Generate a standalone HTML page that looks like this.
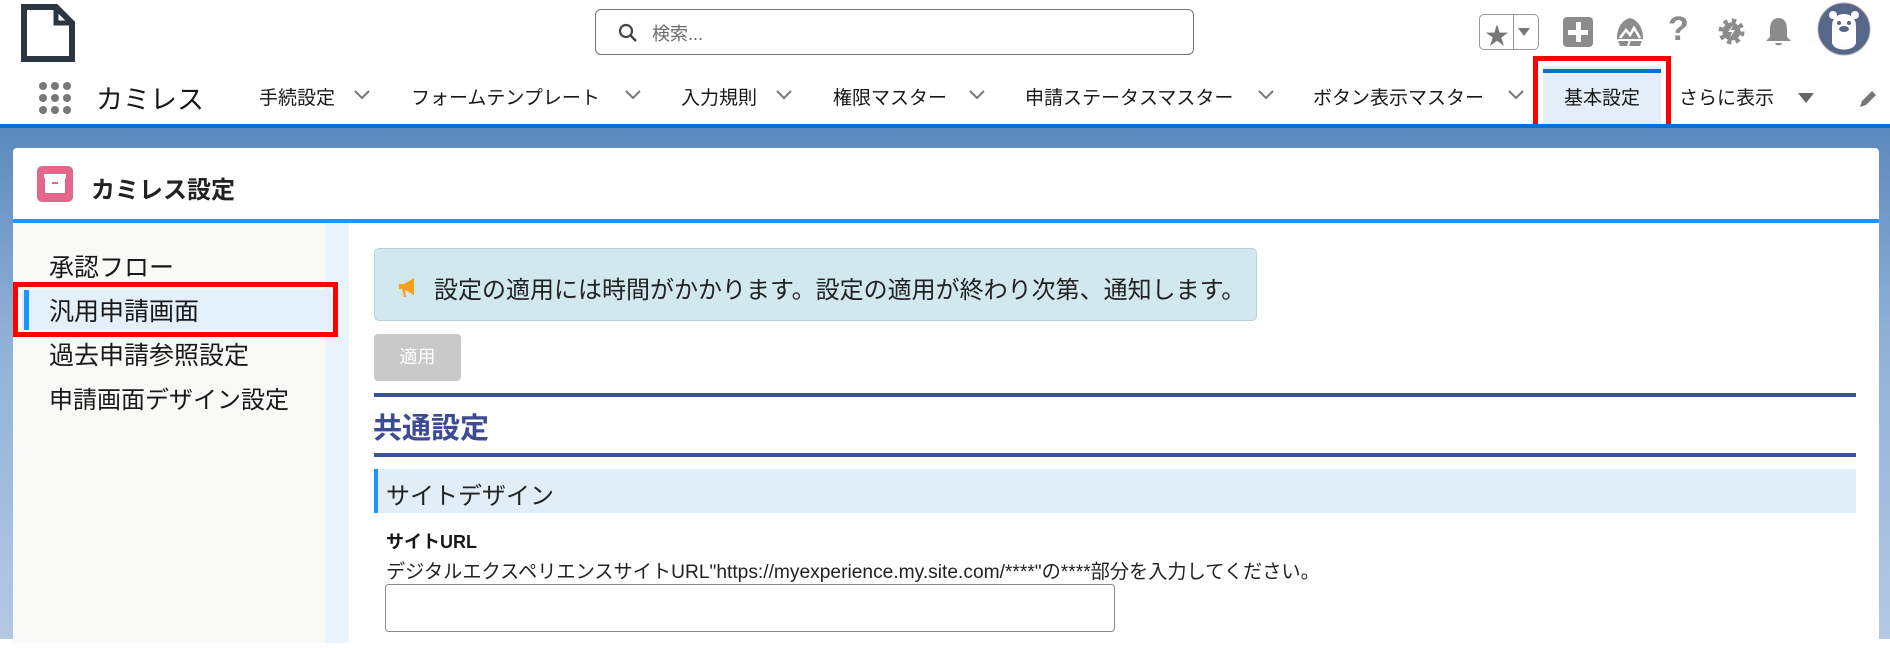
<!DOCTYPE html>
<html><head><meta charset="utf-8"><style>
*{margin:0;padding:0;box-sizing:border-box}
body{width:1890px;height:639px;overflow:hidden;position:relative;background:#fff;font-family:"Liberation Sans","Noto Sans CJK JP",sans-serif;color:#181818}
.a{position:absolute}
.nav{font-size:19px;color:#181818;top:83px;white-space:nowrap}
.chev{top:84px;width:20px;height:20px}
.side{font-size:25px;white-space:nowrap}
</style></head><body>
<svg class="a" style="left:20px;top:4px" width="58" height="58" viewBox="0 0 58 58"><path d="M4 3H36L52 19V55H4Z" fill="#fff" stroke="#2a3642" stroke-width="6"/><path d="M36 3V19H52" fill="none" stroke="#2a3642" stroke-width="5"/></svg>
<div class="a" style="left:595px;top:9px;width:599px;height:46px;border:1px solid #747474;border-radius:6px"></div>
<svg class="a" style="left:618px;top:23px" width="20" height="20" viewBox="0 0 20 20"><circle cx="8" cy="8" r="6" fill="none" stroke="#444" stroke-width="2.2"/><path d="M12.5 12.5L18 18" stroke="#444" stroke-width="2.4"/></svg>
<div class="a" style="left:652px;top:20px;font-size:18px;color:#6b6b6b">検索...</div>
<div class="a" style="left:1479px;top:14px;width:60px;height:36px;border:1px solid #999;border-radius:5px"></div>
<div class="a" style="left:1513px;top:15px;width:1px;height:34px;background:#999"></div>
<div class="a" style="left:1485px;top:16px;font-size:24px;color:#777">★</div>
<div class="a" style="left:1518px;top:28px;width:0;height:0;border-left:6px solid transparent;border-right:6px solid transparent;border-top:8px solid #777"></div>
<div class="a" style="left:1563px;top:17px;width:30px;height:30px;background:#8c8c8c;border-radius:4px"></div>
<div class="a" style="left:1576px;top:22px;width:5px;height:20px;background:#fff"></div>
<div class="a" style="left:1568px;top:30px;width:20px;height:5px;background:#fff"></div>
<svg class="a" style="left:1614px;top:16px" width="32" height="32" viewBox="0 0 32 32"><path d="M16 2C8 4 3 12 3 22L6 30H26L29 22C29 12 24 4 16 2Z" fill="#8c8c8c"/><path d="M6 22L12 14L16 19L20 12L26 22" fill="none" stroke="#fff" stroke-width="2.5"/><path d="M4 24H28M16 24L14 30" stroke="#fff" stroke-width="2"/></svg>
<div class="a" style="left:1668px;top:10px;font-size:34px;font-weight:bold;color:#8c8c8c">?</div>
<svg class="a" style="left:1717px;top:17px" width="29" height="29" viewBox="0 0 29 29"><circle cx="14.5" cy="14.5" r="10" fill="none" stroke="#8c8c8c" stroke-width="6" stroke-dasharray="4 3.85"/><circle cx="14.5" cy="14.5" r="9" fill="#8c8c8c"/><path d="M16 8L11 15H15L13 21L18 13H14Z" fill="#fff"/></svg>
<svg class="a" style="left:1763px;top:16px" width="31" height="32" viewBox="0 0 31 32"><path d="M15.5 2C9 2 7 8 7 13V21L3 25H28L24 21V13C24 8 22 2 15.5 2Z" fill="#8c8c8c"/><path d="M12 27H19C19 30 12 30 12 27Z" fill="#8c8c8c"/></svg>
<svg class="a" style="left:1817px;top:2px" width="54" height="54" viewBox="0 0 54 54"><circle cx="27" cy="27" r="26" fill="#566789" stroke="#aaa"/><circle cx="16" cy="13" r="4" fill="#fff"/><circle cx="38" cy="13" r="4" fill="#fff"/><path d="M15 24C15 8 39 8 39 24V40C39 50 15 50 15 40Z" fill="#fff"/><circle cx="22" cy="21" r="2" fill="#566789"/><circle cx="32" cy="21" r="2" fill="#566789"/><ellipse cx="27" cy="27" rx="5" ry="3" fill="#566789"/></svg>
<svg class="a" style="left:38px;top:81px" width="34" height="34" viewBox="0 0 34 34" fill="#777"><circle cx="5" cy="5" r="4"/><circle cx="17" cy="5" r="4"/><circle cx="29" cy="5" r="4"/><circle cx="5" cy="17" r="4"/><circle cx="17" cy="17" r="4"/><circle cx="29" cy="17" r="4"/><circle cx="5" cy="29" r="4"/><circle cx="17" cy="29" r="4"/><circle cx="29" cy="29" r="4"/></svg>
<div class="a" style="left:96px;top:78px;font-size:27px">カミレス</div>
<div class="a nav" style="left:259px">手続設定</div>
<div class="a nav" style="left:411px">フォームテンプレート</div>
<div class="a nav" style="left:681px">入力規則</div>
<div class="a nav" style="left:833px">権限マスター</div>
<div class="a nav" style="left:1025px">申請ステータスマスター</div>
<div class="a nav" style="left:1313px">ボタン表示マスター</div>
<svg class="a chev" style="left:352px"><path d="M3 7L10 14L17 7" fill="none" stroke="#777" stroke-width="2"/></svg>
<svg class="a chev" style="left:623px"><path d="M3 7L10 14L17 7" fill="none" stroke="#777" stroke-width="2"/></svg>
<svg class="a chev" style="left:774px"><path d="M3 7L10 14L17 7" fill="none" stroke="#777" stroke-width="2"/></svg>
<svg class="a chev" style="left:967px"><path d="M3 7L10 14L17 7" fill="none" stroke="#777" stroke-width="2"/></svg>
<svg class="a chev" style="left:1256px"><path d="M3 7L10 14L17 7" fill="none" stroke="#777" stroke-width="2"/></svg>
<svg class="a chev" style="left:1506px"><path d="M3 7L10 14L17 7" fill="none" stroke="#777" stroke-width="2"/></svg>
<div class="a" style="left:1533px;top:56px;width:138px;height:82px;border:5px solid #f00"></div>
<div class="a" style="left:1543px;top:66px;width:118px;height:58px;background:#e4eef9"></div>
<div class="a" style="left:1543px;top:69px;width:118px;height:4px;background:#0b6fd0"></div>
<div class="a nav" style="left:1564px">基本設定</div>
<div class="a nav" style="left:1679px">さらに表示</div>
<div class="a" style="left:1798px;top:93px;border-left:8px solid transparent;border-right:8px solid transparent;border-top:10px solid #666"></div>
<svg class="a" style="left:1857px;top:88px" width="22" height="22" viewBox="0 0 22 22"><path d="M3 19L5 13L15 3L19 7L9 17Z" fill="#777"/></svg>
<div class="a" style="left:0;top:124px;width:1890px;height:4px;background:#0b6fd0"></div>
<div class="a" style="left:0;top:128px;width:1890px;height:511px;background:linear-gradient(180deg,#5b89bd 0%,#8fb0d6 40%,#b3c9e4 100%)"></div>
<div class="a" style="left:13px;top:148px;width:1866px;height:500px;background:#fff;border-radius:4px 4px 0 0"></div>
<div class="a" style="left:37px;top:166px;width:36px;height:36px;background:#e3678a;border-radius:5px"></div>
<div class="a" style="left:45px;top:177px;width:20px;height:16px;background:#fff;border-radius:1px"></div>
<div class="a" style="left:44px;top:174px;width:22px;height:4px;background:#fff"></div>
<div class="a" style="left:52px;top:182px;width:6px;height:2px;background:#e3678a"></div>
<div class="a" style="left:91px;top:170px;font-size:24px;font-weight:bold;color:#222">カミレス設定</div>
<div class="a" style="left:13px;top:219px;width:1866px;height:4px;background:#1b96ff"></div>
<div class="a" style="left:13px;top:223px;width:312px;height:420px;background:#f9f9f8"></div>
<div class="a" style="left:325px;top:223px;width:24px;height:420px;background:#eaf4fd"></div>
<div class="a side" style="left:49px;top:248px">承認フロー</div>
<div class="a" style="left:13px;top:282px;width:325px;height:55px;border:5px solid #f00"></div>
<div class="a" style="left:22px;top:290px;width:309px;height:40px;background:#e3f0fa"></div>
<div class="a" style="left:24px;top:290px;width:5px;height:40px;background:#1b96ff"></div>
<div class="a side" style="left:49px;top:292px">汎用申請画面</div>
<div class="a side" style="left:49px;top:336px">過去申請参照設定</div>
<div class="a side" style="left:49px;top:380px;font-size:24px">申請画面デザイン設定</div>
<div class="a" style="left:374px;top:248px;width:883px;height:73px;background:#d2e8ef;border:1px solid #b7d2dc;border-radius:5px"></div>
<svg class="a" style="left:397px;top:275px" width="22" height="24" viewBox="0 0 22 24"><path d="M2 9H7L17 3V20L7 14H2Z" fill="#f4a21c"/><path d="M5 14L7 22H9L8 14Z" fill="#f4a21c"/></svg>
<div class="a" style="left:434px;top:270px;font-size:24px;color:#222">設定の適用には時間がかかります。設定の適用が終わり次第、通知します。</div>
<div class="a" style="left:374px;top:334px;width:87px;height:47px;background:#c9c9c9;border-radius:4px;color:#fff;font-size:18px;text-align:center;line-height:47px">適用</div>
<div class="a" style="left:374px;top:393px;width:1482px;height:4px;background:#3b519a"></div>
<div class="a" style="left:373px;top:405px;font-size:29px;font-weight:bold;color:#3b4c94">共通設定</div>
<div class="a" style="left:374px;top:453px;width:1482px;height:4px;background:#3b519a"></div>
<div class="a" style="left:374px;top:469px;width:1482px;height:44px;background:#e1eef8;border-left:4px solid #1b96ff"></div>
<div class="a" style="left:386px;top:476px;font-size:24px;color:#222">サイトデザイン</div>
<div class="a" style="left:386px;top:528px;font-size:18px;font-weight:bold">サイトURL</div>
<div class="a" style="left:386px;top:556px;font-size:19.2px;color:#222;white-space:nowrap">デジタルエクスペリエンスサイトURL"https://myexperience.my.site.com/****"の****部分を入力してください。</div>
<div class="a" style="left:385px;top:584px;width:730px;height:48px;border:1px solid #8a8a8a;border-radius:4px;background:#fff"></div>
</body></html>
